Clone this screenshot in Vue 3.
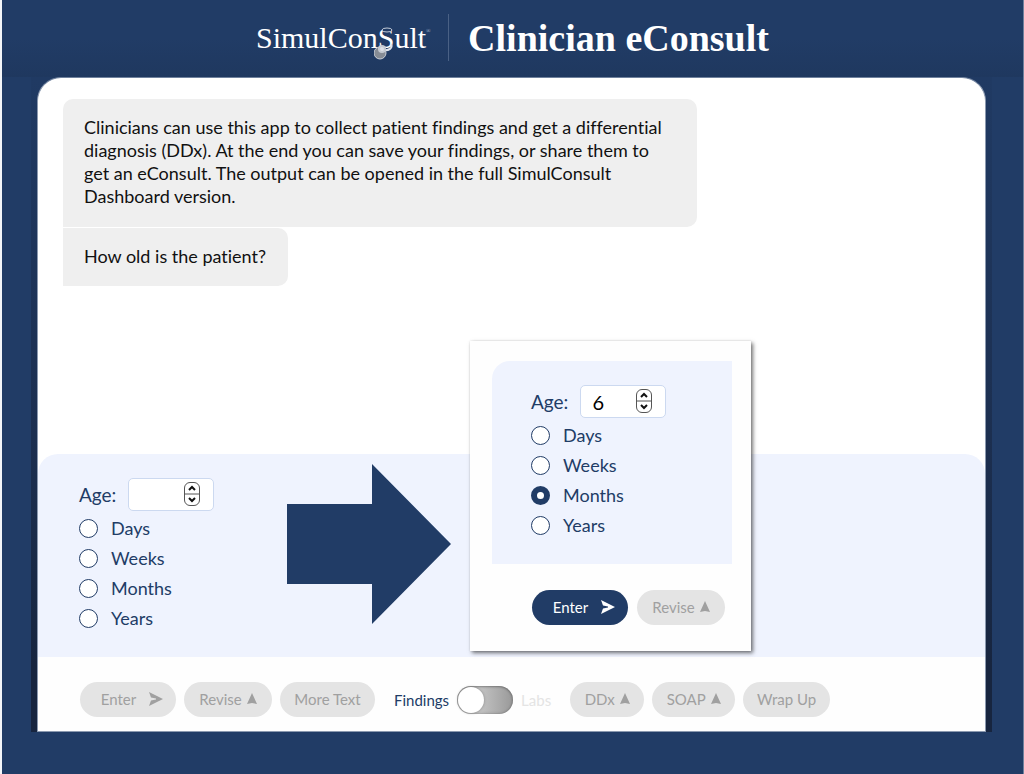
<script setup>
import { ref } from 'vue'

const units = ['Days', 'Weeks', 'Months', 'Years']
const age = ref('')
const unit = ref('')
const sampleAge = ref(6)
const sampleUnit = ref('Months')
const labs = ref(false)
</script>

<template>
  <div class="page">
    <header class="header">
      <div class="logo" aria-label="SimulConsult">
        <span>SimulCon</span><span class="logo-s">S<svg class="scope" viewBox="0 0 22 42" aria-hidden="true">
          <ellipse cx="13" cy="12" rx="5" ry="2" fill="#213c66" stroke="#c3cbd8" stroke-width="1" />
          <path d="M17 26c2 4-2 7-8 6" fill="none" stroke="#dfe4eb" stroke-width="2" />
          <circle cx="6" cy="35" r="6" fill="#868c95" stroke="#c9ced6" stroke-width="1" />
          <circle cx="8" cy="31" r="4" fill="#c5cad2" />
          <circle cx="8" cy="31" r="2" fill="#dde1e7" />
        </svg></span><span>ult</span><sup>®</sup>
      </div>
      <span class="divider"></span>
      <h1>Clinician eConsult</h1>
    </header>

    <div class="shell">
      <main class="card">
        <section class="messages">
          <p class="bubble first">
            Clinicians can use this app to collect patient findings and get a differential<br />
            diagnosis (DDx). At the end you can save your findings, or share them to<br />
            get an eConsult. The output can be opened in the full SimulConsult<br />
            Dashboard version.
          </p>
          <p class="bubble second">How old is the patient?</p>
        </section>

        <section class="panel">
          <form class="age-form" @submit.prevent>
            <div class="age-row">
              <label for="age">Age:</label>
              <span class="number">
                <input id="age" v-model="age" type="number" min="0" />
                <svg class="spin" viewBox="0 0 16 24" aria-hidden="true">
                  <rect x="0.500" y="0.500" width="15" height="23" rx="5.500" fill="#fff" stroke="#555" />
                  <path d="M0.500 12h15" stroke="#555" />
                  <path d="M5 8l3-3 3 3M5 16l3 3 3-3" fill="none" stroke="#111" stroke-width="2" />
                </svg>
              </span>
            </div>
            <label v-for="u in units" :key="u" class="option">
              <input v-model="unit" type="radio" name="unit" :value="u" />{{ u }}
            </label>
          </form>

          <svg class="arrow" viewBox="0 0 164 160" aria-hidden="true">
            <path d="M0 40H85V0L164 80L85 160V120H0Z" fill="#213c66" />
          </svg>

          <aside class="popup">
            <form class="age-form popup-form" @submit.prevent>
              <div class="age-row">
                <label for="sample-age">Age:</label>
                <span class="number">
                  <input id="sample-age" v-model="sampleAge" type="number" min="0" />
                  <svg class="spin" viewBox="0 0 16 24" aria-hidden="true">
                    <rect x="0.500" y="0.500" width="15" height="23" rx="5.500" fill="#fff" stroke="#555" />
                    <path d="M0.500 12h15" stroke="#555" />
                    <path d="M5 8l3-3 3 3M5 16l3 3 3-3" fill="none" stroke="#111" stroke-width="2" />
                  </svg>
                </span>
              </div>
              <label v-for="u in units" :key="u" class="option">
                <input v-model="sampleUnit" type="radio" name="sample-unit" :value="u" />{{ u }}
              </label>
            </form>
            <div class="popup-actions">
              <button type="button" class="pill enter primary">
                Enter
                <svg class="send" viewBox="0 0 14 14" aria-hidden="true"><path d="M0 0L14 7L0 14L2 8.500L7 7.500V6.500L2 5.500Z" fill="currentColor" /></svg>
              </button>
              <button type="button" class="pill revise">
                Revise
                <svg class="up" viewBox="0 0 10 11" aria-hidden="true"><path d="M5 0L10 11L5 10L0 11Z" fill="currentColor" /></svg>
              </button>
            </div>
          </aside>
        </section>

        <nav class="actions">
          <button type="button" class="pill enter">
            Enter
            <svg class="send" viewBox="0 0 14 14" aria-hidden="true"><path d="M0 0L14 7L0 14L2 8.500L7 7.500V6.500L2 5.500Z" fill="currentColor" /></svg>
          </button>
          <button type="button" class="pill revise">
            Revise
            <svg class="up" viewBox="0 0 10 11" aria-hidden="true"><path d="M5 0L10 11L5 10L0 11Z" fill="currentColor" /></svg>
          </button>
          <button type="button" class="pill more">More Text</button>
          <label class="switch">
            <span class="on">Findings</span>
            <input v-model="labs" type="checkbox" role="switch" />
            <span class="off">Labs</span>
          </label>
          <button type="button" class="pill ddx">
            DDx
            <svg class="up" viewBox="0 0 10 11" aria-hidden="true"><path d="M5 0L10 11L5 10L0 11Z" fill="currentColor" /></svg>
          </button>
          <button type="button" class="pill soap">
            SOAP
            <svg class="up" viewBox="0 0 10 11" aria-hidden="true"><path d="M5 0L10 11L5 10L0 11Z" fill="currentColor" /></svg>
          </button>
          <button type="button" class="pill wrap">Wrap Up</button>
        </nav>
      </main>
    </div>
  </div>
</template>

<style>
body {
  margin: 0;
  background: #213c66;
}
</style>

<style scoped>
* {
  box-sizing: border-box;
}
.page {
  min-height: 100vh;
  display: flex;
  flex-direction: column;
  padding-bottom: 42px;
  background: #213c66;
  border-left: 2px solid #f4f6f9;
  border-right: 1px solid #6f819d;
  font-family: Lato, "Liberation Sans", sans-serif;
  font-variant-ligatures: none;
  color: #213c66;
}
.header {
  height: 77px;
  display: flex;
  justify-content: center;
  align-items: center;
  padding-bottom: 2px;
  background: linear-gradient(#213c66 50%, #1f385f);
  color: #fff;
  font-family: "Liberation Serif", serif;
}
.logo {
  display: flex;
  align-items: baseline;
  font-size: 30px;
  line-height: 40px;
}
.logo sup {
  align-self: flex-start;
  width: 3px;
  font-size: 6px;
  line-height: 26px;
  color: #b5bfce;
}
.logo-s {
  position: relative;
}
.scope {
  position: absolute;
  left: -4px;
  top: 0;
  width: 22px;
  height: 42px;
}
.divider {
  width: 1px;
  height: 47px;
  margin: 0 19px;
  background: #4a6185;
}
h1 {
  margin: 0;
  font-size: 38px;
  line-height: 40px;
  font-weight: 700;
}
.shell {
  flex: 1;
  display: flex;
  margin: 0 31px 0 29px;
  padding: 0 6px;
  background: linear-gradient(#203a63, #1c2f50 55%, #17253f 90%);
}
.card {
  flex: 1;
  display: flex;
  flex-direction: column;
  background: #fff;
  border: 1px solid #8b99af;
  border-top-color: #6f819d;
  border-radius: 24px 24px 0 0;
}
.messages {
  flex: 1;
  display: flex;
  flex-direction: column;
  align-items: flex-start;
  gap: 1px;
  padding: 21px 25px;
}
.bubble {
  margin: 0;
  padding: 17px 22px 18px 21px;
  background: #efefef;
  color: #111;
  font-size: 18px;
  line-height: 23px;
}
.first {
  padding-bottom: 19px;
  width: 634px;
  max-width: 100%;
  border-radius: 10px 10px 10px 0;
}
.second {
  border-radius: 0 10px 10px 0;
}
.panel {
  position: relative;
  display: flex;
  align-items: flex-start;
  background: #eff3fe;
  border-radius: 20px 20px 0 0;
}
.age-form {
  padding: 24px 0 24px 41px;
  font-size: 18px;
}
.age-row {
  display: flex;
  align-items: center;
  gap: 12px;
  margin-bottom: 2px;
  font-size: 19px;
}
.number {
  position: relative;
  display: flex;
}
.number input {
  width: 86px;
  height: 33px;
  padding: 0 34px 0 11px;
  border: 1px solid #ccd9f0;
  border-radius: 5px;
  background: #fff;
  color: #000;
  font: 20px Lato, sans-serif;
  appearance: textfield;
}
.number input::-webkit-inner-spin-button {
  appearance: none;
  margin: 0;
}
.spin {
  position: absolute;
  right: 14px;
  top: 4px;
  width: 16px;
  height: 24px;
}
.option {
  display: flex;
  align-items: center;
  gap: 13px;
  height: 30px;
}
.option input {
  appearance: none;
  width: 19px;
  height: 19px;
  margin: 0;
  border: 1px solid #213c66;
  border-radius: 50%;
  background: #fff;
}
.option input:checked {
  border-width: 6px;
}
.arrow {
  width: 164px;
  height: 160px;
  margin: 10px 0 0 73px;
}
.popup {
  position: absolute;
  left: 432px;
  bottom: 6px;
  width: 281px;
  padding: 20px 19px 26px 22px;
  background: #fefefe;
  box-shadow: 2px 2px 4px rgba(0, 0, 0, 0.55), 0 0 2px rgba(0, 0, 0, 0.1);
}
.popup-form {
  padding-left: 39px;
  background: #eff3fe;
  border-radius: 18px 0 0 0;
}
.popup-actions {
  display: flex;
  gap: 9px;
  padding: 26px 0 0 40px;
}
.actions {
  display: flex;
  align-items: center;
  gap: 8px;
  padding: 25px 42px 14px;
  background: #fefefe;
}
.pill {
  flex: none;
  display: flex;
  justify-content: center;
  align-items: center;
  gap: 5px;
  height: 35px;
  padding: 0 0 2px;
  border: 0;
  border-radius: 18px;
  background: #e4e4e4;
  color: #a0a0a0;
  font: 15px Lato, sans-serif;
}
.enter {
  width: 96px;
  gap: 13px;
  padding-left: 8px;
}
.primary {
  background: #213c66;
  color: #fff;
}
.revise {
  width: 88px;
}
.more {
  width: 95px;
}
.ddx {
  width: 74px;
}
.soap {
  width: 83px;
}
.wrap {
  width: 87px;
}
.send {
  width: 14px;
  height: 14px;
}
.up {
  width: 10px;
  height: 11px;
}
.switch {
  display: flex;
  align-items: center;
  gap: 8px;
  margin: 0 11px;
  font-size: 15px;
}
.switch .off {
  color: #e4e4e4;
}
.switch input {
  appearance: none;
  width: 56px;
  height: 28px;
  margin: 0;
  padding: 1px;
  border-radius: 14px;
  background: linear-gradient(90deg, #c4c4c4 40%, #999);
  box-shadow: inset 0 0 3px rgba(0, 0, 0, 0.3), inset 0 1px 2px rgba(0, 0, 0, 0.2);
}
.switch input::before {
  content: "";
  display: block;
  width: 26px;
  height: 26px;
  border-radius: 50%;
  background: #fff;
  box-shadow: 0 0 3px rgba(0, 0, 0, 0.3);
}
.switch input:checked::before {
  margin-left: auto;
}
</style>
